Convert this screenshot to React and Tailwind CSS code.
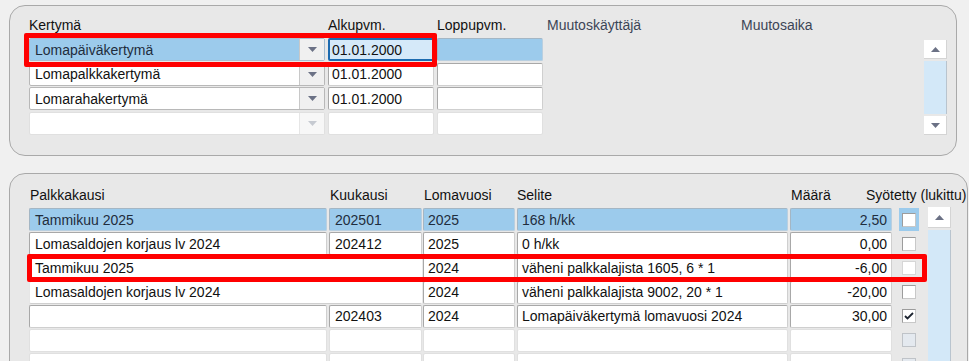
const Tri = ({ up, light }) => (
  <svg width="9" height="5" viewBox="0 0 9 5">
    <path d={up ? 'M0 5h9L4.5 0z' : 'M0 0h9L4.5 5z'} fill={light ? '#c6cad1' : '#6b7185'} />
  </svg>
);

const kertymat = [
  { k: 'Lomapäiväkertymä', d: '01.01.2000', sel: true },
  { k: 'Lomapalkkakertymä', d: '01.01.2000' },
  { k: 'Lomarahakertymä', d: '01.01.2000' },
  { k: '', d: '', empty: true },
];

const kaudet = [
  { p: 'Tammikuu 2025', k: '202501', l: '2025', s: '168 h/kk', m: '2,50', sel: true },
  { p: 'Lomasaldojen korjaus lv 2024', k: '202412', l: '2025', s: '0 h/kk', m: '0,00' },
  { p: 'Tammikuu 2025', merged: true, l: '2024', s: 'väheni palkkalajista 1605, 6 * 1', m: '-6,00', faint: true },
  { p: 'Lomasaldojen korjaus lv 2024', merged: true, l: '2024', s: 'väheni palkkalajista 9002, 20 * 1', m: '-20,00' },
  { p: '', k: '202403', l: '2024', s: 'Lomapäiväkertymä lomavuosi 2024', m: '30,00', checked: true },
  { empty: true },
  { empty: true },
  { empty: true },
];

const cellBase = 'h-full flex items-center border rounded-[2px] shrink-0 whitespace-nowrap';

function Cell({ w, sel, empty, right, children, className = '' }) {
  const tone = sel
    ? 'bg-[#9ccbec] border-[#b9cfe0] border-t-[#a4b6c4] border-l-[#a4b6c4] text-[#1f2d3d]'
    : empty
      ? 'bg-white border-[#e0e0e0]'
      : 'bg-white border-[#cfcfcf] border-t-[#a8a8a8] border-l-[#a8a8a8]';
  return (
    <div className={`${cellBase} ${tone} ${w} ${right ? 'justify-end pr-[4px]' : 'pl-[5px]'} ${className}`}>
      {children}
    </div>
  );
}

export default function App() {
  return (
    <div className="relative w-[969px] h-[361px] overflow-hidden bg-[#f0f0f0] pt-[5px] pl-[9px] text-[14px] leading-[16px] text-[#111] font-['Liberation_Sans',Arial,sans-serif]">
      {/* Kertymät */}
      <div className="w-[948px] h-[151px] rounded-[16px] border border-[#a9a9a9] bg-[#e8e8e8] flex pl-[19px] pt-[11px]">
        <div className="w-[895px] flex flex-col shrink-0">
          <div className="flex h-[21px] shrink-0 whitespace-nowrap">
            <div className="w-[299px] shrink-0">Kertymä</div>
            <div className="w-[109px] shrink-0">Alkupvm.</div>
            <div className="w-[110px] shrink-0">Loppupvm.</div>
            <div className="w-[194px] shrink-0 text-[#3c4556]">Muutoskäyttäjä</div>
            <div className="text-[#3c4556]">Muutosaika</div>
          </div>
          <div className="flex flex-col gap-[1.5px] shrink-0">
            {kertymat.map((r, i) => (
              <div key={i} className="flex h-[23px] gap-[3px] shrink-0">
                <div
                  className={`flex w-[296px] h-full border rounded-[2px] shrink-0 ${
                    r.sel
                      ? 'bg-[#9ccbec] border-[#a9bfd1] text-[#1f2d3d]'
                      : r.empty
                        ? 'bg-white border-[#e0e0e0]'
                        : 'bg-white border-[#b8b8b8]'
                  }`}
                >
                  <div className="flex-1 flex items-center pl-[5px]">{r.k}</div>
                  <div className={`w-[25px] flex items-center justify-center border-l ${r.empty ? 'bg-[#f7f7f7] border-[#e6e6e6]' : 'bg-[#f0f0f0] border-[#c8c8c8]'}`}>
                    <Tri light={r.empty} />
                  </div>
                </div>
                {r.sel ? (
                  <div className="w-[106px] h-full flex items-center pl-[2px] bg-[#d5e9f9] border-2 border-[#1c6bb0] rounded-[2px] shrink-0">
                    {r.d}
                  </div>
                ) : (
                  <Cell w="w-[106px]" empty={r.empty} className="!pl-[3px]">{r.d}</Cell>
                )}
                <Cell w="w-[106px]" sel={r.sel} empty={r.empty} />
              </div>
            ))}
          </div>
        </div>
        <div className="w-[23px] mt-[23px] flex flex-col gap-[2px] shrink-0">
          <div className="h-[19px] bg-white border-r border-b border-[#d4d4d4] flex items-center justify-center">
            <Tri up />
          </div>
          <div className="h-[53px] bg-[#d3e8f8] border-r border-[#b9c4ce]" />
          <div className="h-[19px] bg-white border-r border-b border-[#d4d4d4] flex items-center justify-center">
            <Tri />
          </div>
        </div>
      </div>

      {/* Palkkakaudet */}
      <div className="mt-[17px] w-[959px] h-[220px] rounded-t-[16px] border border-[#a9a9a9] bg-[#e8e8e8] flex pl-[19px] pt-[13px] overflow-hidden">
        <div className="w-[896px] flex flex-col shrink-0">
          <div className="flex h-[21px] shrink-0 whitespace-nowrap">
            <div className="w-[300px] shrink-0 pl-[1px]">Palkkakausi</div>
            <div className="w-[94px] shrink-0 pl-[1px]">Kuukausi</div>
            <div className="w-[93px] shrink-0 pl-[1px]">Lomavuosi</div>
            <div className="w-[274px] shrink-0 pl-[1px]">Selite</div>
            <div className="w-[76px] shrink-0 pl-[1px]">Määrä</div>
            <div className="shrink-0">Syötetty (lukittu)</div>
          </div>
          <div className="flex flex-col gap-[1.2px] shrink-0">
            {kaudet.map((r, i) => (
              <div key={i} className="flex h-[23px] shrink-0">
                {r.merged ? (
                  <Cell w="w-[393px]" className="mr-[1px] border-l-[#e6e6e6] border-r-white">{r.p}</Cell>
                ) : (
                  <>
                    <Cell w="w-[298px]" sel={r.sel} empty={r.empty} className="mr-[2px]">{r.p}</Cell>
                    <Cell w="w-[93px]" sel={r.sel} empty={r.empty} className="mr-[1px]">{r.k}</Cell>
                  </>
                )}
                <Cell w="w-[92px]" sel={r.sel} empty={r.empty} className="mr-[2px] !pl-[4px]">{r.l}</Cell>
                <Cell w="w-[271px]" sel={r.sel} empty={r.empty} className="mr-[2px] !pl-[4px]">{r.s}</Cell>
                <Cell w="w-[102px]" sel={r.sel} empty={r.empty} right>{r.m}</Cell>
                <div className={`ml-[7px] w-[20px] h-full shrink-0 flex items-center justify-center ${r.sel ? 'bg-[#9ccbec]' : ''}`}>
                  <div
                    className={`w-[14px] h-[14px] border flex items-center justify-center ${
                      r.empty
                        ? 'bg-[#e4e9ef] border-[#bfc3c8]'
                        : r.faint
                          ? 'bg-white border-[#d6d6d6]'
                          : 'bg-white border-[#c8c8c8] border-t-[#9c9c9c] border-l-[#9c9c9c]'
                    }`}
                  >
                    {r.checked && (
                      <svg width="10" height="8" viewBox="0 0 10 8">
                        <path d="M1 4l2.5 2.5L9 1" fill="none" stroke="#1d2430" strokeWidth="1.8" />
                      </svg>
                    )}
                  </div>
                </div>
              </div>
            ))}
          </div>
        </div>
        <div className="w-[23px] ml-[3px] mt-[20px] flex flex-col gap-[2px] shrink-0">
          <div className="h-[21px] bg-white border-r border-b border-[#d4d4d4] flex items-center justify-center">
            <Tri up />
          </div>
          <div className="flex-1 bg-[#d3e8f8] border-r border-[#b9c4ce]" />
        </div>
      </div>

      {/* annotations */}
      <div className="absolute left-[24px] top-[33px] w-[413px] h-[34px] border-[5px] border-[#ff0000] rounded-[2px] pointer-events-none" />
      <div className="absolute left-[27px] top-[254px] w-[900px] h-[28px] border-[5px] border-[#ff0000] rounded-[2px] pointer-events-none" />
    </div>
  );
}
